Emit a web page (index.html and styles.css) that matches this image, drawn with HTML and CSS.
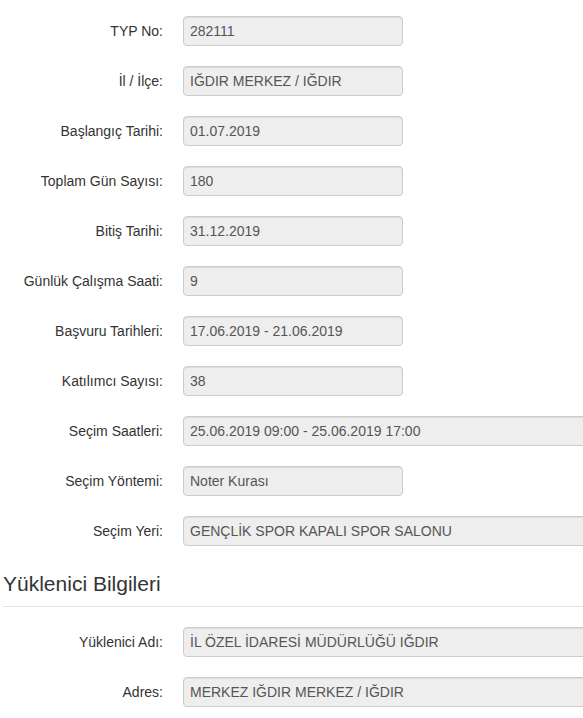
FILE: index.html
```html
<!DOCTYPE html>
<html lang="tr">
<head>
    <meta charset="UTF-8">
    <meta name="viewport" content="width=device-width, initial-scale=1.0">
    <title>TYP Detay</title>
    <link rel="stylesheet" href="styles.css">
</head>
<body>
    <div class="page">
        <!-- Program Bilgileri -->
        <div class="form">
            <div class="form-row">
                <label class="form-label">TYP No:</label>
                <input class="form-control short" type="text" value="282111" readonly>
            </div>
            <div class="form-row">
                <label class="form-label">İl / İlçe:</label>
                <input class="form-control short" type="text" value="IĞDIR MERKEZ / IĞDIR" readonly>
            </div>
            <div class="form-row">
                <label class="form-label">Başlangıç Tarihi:</label>
                <input class="form-control short" type="text" value="01.07.2019" readonly>
            </div>
            <div class="form-row">
                <label class="form-label">Toplam Gün Sayısı:</label>
                <input class="form-control short" type="text" value="180" readonly>
            </div>
            <div class="form-row">
                <label class="form-label">Bitiş Tarihi:</label>
                <input class="form-control short" type="text" value="31.12.2019" readonly>
            </div>
            <div class="form-row">
                <label class="form-label">Günlük Çalışma Saati:</label>
                <input class="form-control short" type="text" value="9" readonly>
            </div>
            <div class="form-row">
                <label class="form-label">Başvuru Tarihleri:</label>
                <input class="form-control short" type="text" value="17.06.2019 - 21.06.2019" readonly>
            </div>
            <div class="form-row">
                <label class="form-label">Katılımcı Sayısı:</label>
                <input class="form-control short" type="text" value="38" readonly>
            </div>
            <div class="form-row">
                <label class="form-label">Seçim Saatleri:</label>
                <input class="form-control wide" type="text" value="25.06.2019 09:00 - 25.06.2019 17:00" readonly>
            </div>
            <div class="form-row">
                <label class="form-label">Seçim Yöntemi:</label>
                <input class="form-control short" type="text" value="Noter Kurası" readonly>
            </div>
            <div class="form-row">
                <label class="form-label">Seçim Yeri:</label>
                <input class="form-control wide" type="text" value="GENÇLİK SPOR KAPALI SPOR SALONU" readonly>
            </div>
        </div>

        <!-- Yüklenici Bilgileri -->
        <h3 class="section-title">Yüklenici Bilgileri</h3>
        <div class="form">
            <div class="form-row">
                <label class="form-label">Yüklenici Adı:</label>
                <input class="form-control wide" type="text" value="İL ÖZEL İDARESİ MÜDÜRLÜĞÜ IĞDIR" readonly>
            </div>
            <div class="form-row">
                <label class="form-label">Adres:</label>
                <input class="form-control wide" type="text" value="MERKEZ IĞDIR MERKEZ / IĞDIR" readonly>
            </div>
        </div>
    </div>
</body>
</html>
```

FILE: styles.css
```css
body {
    margin: 0;
    font-family: "Liberation Sans", Arial, sans-serif;
    font-size: 14px;
    color: #333;
    background: #fff;
}
.page {
    padding: 16px 0 0 3px;
    overflow: hidden;
}
.form {
    display: flex;
    flex-direction: column;
    gap: 20px;
}
.form-row {
    display: flex;
    align-items: center;
    gap: 20px;
}
.form-label {
    flex: none;
    width: 160px;
    text-align: right;
    line-height: 30px;
    color: #333;
}
.form-control {
    flex: none;
    box-sizing: border-box;
    height: 30px;
    padding: 0 6px;
    font-family: inherit;
    font-size: 14px;
    color: #555;
    background: #eee;
    border: 1px solid #ccc;
    border-radius: 4px;
    box-shadow: inset 0 1px 1px rgba(0, 0, 0, 0.075);
    outline: none;
}
.short {
    width: 220px;
}
.wide {
    width: 440px;
}
.section-title {
    margin: 26px 0 20px 0;
    padding-bottom: 11px;
    border-bottom: 1px solid #e5e5e5;
    font-size: 21px;
    font-weight: normal;
    line-height: 23px;
    color: #333;
}
```
